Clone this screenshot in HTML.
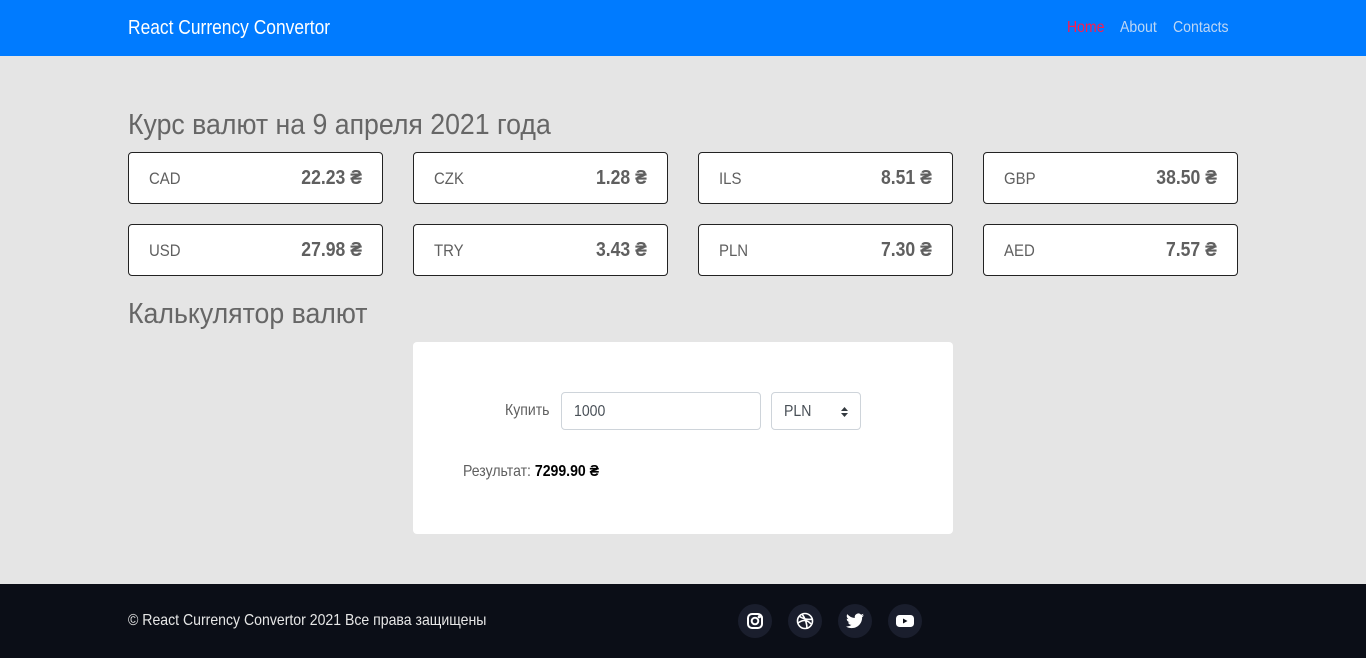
<!DOCTYPE html>
<html><head><meta charset="utf-8"><style>
*{box-sizing:border-box;margin:0;padding:0}
body{width:1366px;height:658px;background:#e5e5e5;font-family:"Liberation Sans","Noto Sans CJK SC",sans-serif;color:#5f5f5f;position:relative;overflow:hidden}
.s{display:inline-block;transform:scaleX(.88);transform-origin:left center;white-space:nowrap}
.sr{display:inline-block;transform:scaleX(.88);transform-origin:right center;white-space:nowrap}
.nav{position:absolute;left:0;top:0;width:1366px;height:56px;background:#007bff}
.brand{position:absolute;left:128px;top:17px;color:#fff;font-size:20px}
.nl{position:absolute;top:19px;font-size:16px;color:#bcd6f5}
h2{position:absolute;left:128px;font-weight:400;font-size:29px;color:#666}
.card{position:absolute;width:255px;height:52px;background:#fff;border:1px solid #222;border-radius:4px;font-size:17px}
.card .c{position:absolute;left:20px;top:16px}
.card .v{position:absolute;right:20px;top:14px;font-weight:700;font-size:20px}
.calc{position:absolute;left:413px;top:342px;width:540px;height:192px;background:#fff;border-radius:4px}
.inp{position:absolute;border:1px solid #ced4da;border-radius:4px;height:38px;font-size:16px;color:#495057;padding:10px 12px}
.foot{position:absolute;left:0;top:584px;width:1366px;height:74px;background:#0b0e17;color:#e6e6e6}
.ic{position:absolute;top:20px;width:34px;height:34px;border-radius:50%;background:#1a1e2d;display:flex;align-items:center;justify-content:center}
</style></head><body>
<div class="nav"><div class="brand"><span class="s" style="transform:scaleX(.87)">React Currency Convertor</span></div>
<div class="nl" style="left:1067px;color:#ff1a4b"><span class="s">Home</span></div><div class="nl" style="left:1120px"><span class="s">About</span></div><div class="nl" style="left:1173px"><span class="s">Contacts</span></div></div>
<h2 style="top:109px"><span class="s" style="transform:scaleX(.92)">Курс валют на 9 апреля 2021 года</span></h2>
<div class="card" style="left:128px;top:152px"><span class="c s">CAD</span><span class="v sr">22.23 ₴</span></div>
<div class="card" style="left:413px;top:152px"><span class="c s">CZK</span><span class="v sr">1.28 ₴</span></div>
<div class="card" style="left:698px;top:152px"><span class="c s">ILS</span><span class="v sr">8.51 ₴</span></div>
<div class="card" style="left:983px;top:152px"><span class="c s">GBP</span><span class="v sr">38.50 ₴</span></div>
<div class="card" style="left:128px;top:224px"><span class="c s">USD</span><span class="v sr">27.98 ₴</span></div>
<div class="card" style="left:413px;top:224px"><span class="c s">TRY</span><span class="v sr">3.43 ₴</span></div>
<div class="card" style="left:698px;top:224px"><span class="c s">PLN</span><span class="v sr">7.30 ₴</span></div>
<div class="card" style="left:983px;top:224px"><span class="c s">AED</span><span class="v sr">7.57 ₴</span></div>
<h2 style="top:298px"><span class="s" style="transform:scaleX(.92)">Калькулятор валют</span></h2>
<div class="calc">
<div style="position:absolute;left:92px;top:60px;font-size:16px"><span class="s">Купить</span></div>
<div class="inp" style="left:148px;top:50px;width:200px"><span class="s">1000</span></div>
<div class="inp" style="left:358px;top:50px;width:90px"><span class="s">PLN</span><svg style="position:absolute;right:12px;top:14px" width="7" height="10" viewBox="0 0 7 10"><path d="M0 4L3.5 0L7 4zM0 6L3.5 10L7 6z" fill="#343a40"/></svg></div>
<div style="position:absolute;left:50px;top:121px;font-size:16px"><span class="s">Результат: <b style="color:#000">7299.90 ₴</b></span></div>
</div>
<div class="foot"><div style="position:absolute;left:128px;top:28px;font-size:16px"><span class="s">© React Currency Convertor 2021 Все права защищены</span></div>
<div class="ic" style="left:738px"><svg width="18" height="18" viewBox="0 0 18 18" fill="none" stroke="#fff" stroke-width="2"><rect x="2" y="2" width="14" height="14" rx="4"/><circle cx="9" cy="9" r="3.3"/><circle cx="13.3" cy="4.7" r=".6" fill="#fff"/></svg></div>
<div class="ic" style="left:788px"><svg width="18" height="18" viewBox="0 0 18 18" fill="none" stroke="#fff" stroke-width="1.6"><circle cx="9" cy="9" r="7.5"/><path d="M3 4c4 3 9 4 14 3M6 2c3 4 5 9 5 15M2 11c4-3 9-4 13 1"/></svg></div>
<div class="ic" style="left:838px"><svg width="18" height="16" viewBox="0 0 24 20"><path fill="#fff" d="M24 2.4a10 10 0 0 1-2.8.8A5 5 0 0 0 23.3.4a10 10 0 0 1-3.1 1.2A4.9 4.9 0 0 0 11.8 6 14 14 0 0 1 1.7.9a4.9 4.9 0 0 0 1.5 6.6A5 5 0 0 1 1 6.9a4.9 4.9 0 0 0 3.9 4.8 5 5 0 0 1-2.2.1 4.9 4.9 0 0 0 4.6 3.4A9.9 9.9 0 0 1 0 17.3 14 14 0 0 0 7.5 19.5c9.1 0 14-7.5 14-14v-.6A10 10 0 0 0 24 2.4z"/></svg></div>
<div class="ic" style="left:888px"><svg width="18" height="14" viewBox="0 0 18 14"><rect x="0" y="1" width="18" height="12" rx="3.5" fill="#fff"/><path d="M7 4.5v5l4.5-2.5z" fill="#0b0e17"/></svg></div>
</div>
</body></html>
